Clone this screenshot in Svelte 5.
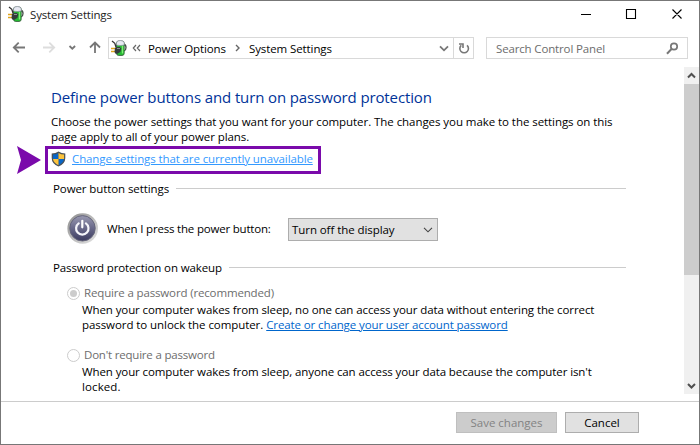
<script>
  const path = ['Power Options', 'System Settings'];
</script>

{#snippet plug(size)}
  <svg class="plug" width={size} height={size} viewBox="0 0 16 16">
    <path d="M13 4.500q2 .2 2 3t-2 3.500" fill="none" stroke="#444c47" stroke-width="1.300" />
    <rect x="5.500" y="1" width="7.700" height="14.500" rx="2.200" fill="#25b933" stroke="#365c3b" stroke-width=".8" />
    <path d="M5.500 5V3q0-2.500 3.800-2.500T13.200 3v2q-4 1-7.700 0z" fill="#e8eaf3" stroke="#858a98" stroke-width=".6" />
    <path d="M11.500 6v7.500" stroke="#82ef77" stroke-width="1.400" />
    <path d="M1 1l2.800 2.300L5 7" fill="none" stroke="#333" stroke-width="1.300" />
    <path d="M0 8.500h4M0 11.500h5" stroke="#dfa51c" stroke-width="1.600" />
    <path d="M4 7.500l4.500-.8 1.800 1.800-.8 3.200-3 2H4.500L3.500 12z" fill="#343b3c" />
    <path d="M6 8.500h3" stroke="#8c9492" />
  </svg>
{/snippet}

<div class="window">
  <header class="titlebar">
    {@render plug(16)}
    <span class="title">System Settings</span>
    <svg class="controls" width="102" height="12" viewBox="0 0 102 12">
      <path d="M0 6.500h10M45.500 1.500h9v9h-9zM91.500 1.500l9 9M100.500 1.500l-9 9" fill="none" stroke="#000" stroke-width="1.100" />
    </svg>
  </header>

  <nav class="navbar">
    <svg class="arrows" width="90" height="16" viewBox="0 0 90 16">
      <g fill="none" stroke="#777" stroke-width="1.800">
        <path d="M13 7.500H2M6.700 2.700L1.800 7.500l4.900 4.800" />
        <path d="M31 7.500h11M37.300 2.700l4.900 4.800-4.900 4.800" stroke="#ddd" />
        <path d="M57.500 6l2.800 2.700L63.100 6" />
        <path d="M83 13V2.500M78 7.500l5-5 5 5" />
      </g>
    </svg>
    <div class="address">
      {@render plug(16)}
      <svg class="back" width="9" height="8" viewBox="0 0 9 8"><path d="M4 1L1.300 4 4 7M8 1L5.300 4 8 7" fill="none" stroke="#666" stroke-width="1.200" /></svg>
      <span class="crumb first">{path[0]}</span>
      <svg class="sep" width="5" height="8" viewBox="0 0 5 8"><path d="M1 1l3 3-3 3" fill="none" stroke="#666" stroke-width="1.400" /></svg>
      <span class="crumb second">{path[1]}</span>
      <svg class="down" width="10" height="7" viewBox="0 0 10 7"><path d="M1 1.300l4 4 4-4" fill="none" stroke="#777" stroke-width="1.800" /></svg>
      <span class="refresh">
        <svg width="12" height="13" viewBox="0 0 12 13"><path d="M3.300 3.300A4.300 4.300 0 1 0 9 3.300M1 2h4v4" fill="none" stroke="#777" stroke-width="1.600" /></svg>
      </span>
    </div>
    <div class="search">
      <span>Search Control Panel</span>
      <svg width="13" height="13" viewBox="0 0 13 13"><circle cx="8" cy="4.500" r="3.200" fill="none" stroke="#777" stroke-width="1.700" /><path d="M5.500 7L1 11.700" stroke="#777" stroke-width="2" /></svg>
    </div>
  </nav>

  <div class="body">
    <main>
      <h1><span>Define power buttons and turn on password protection</span></h1>
      <p class="intro"><span class="i1">Choose the power settings that you want for your computer. The changes you make to the settings on this</span><span class="i2">page apply to all of your power plans.</span></p>

      <div class="callout">
        <svg class="pointer" width="24" height="28" viewBox="0 0 24 28"><path d="M0 0l24 14L0 28l4-14z" fill="#7a0aab" /></svg>
        <div class="highlight">
          <svg width="15" height="16" viewBox="0 0 15 16">
            <path d="M7.500 .5Q10.500 2.400 14.300 2.500V7q0 5.800-6.800 8.500Q.7 12.800 .7 7V2.500Q4.500 2.400 7.500 .5z" fill="#4b5155" />
            <path d="M7.500 1.900V8H1.900V3.600Q5 3.500 7.500 1.900zM7.500 8h5.500q-.6 4.100-5.500 6.300z" fill="#0966c6" />
            <path d="M7.500 1.900Q10 3.500 13.100 3.600V8H7.500zM7.500 8v6.300Q2.600 12.100 2 8z" fill="#fcc33c" />
          </svg>
          <a class="change" href="#change">Change settings that are currently unavailable</a>
        </div>
      </div>

      <div class="section s1"><h2>Power button settings</h2><hr /></div>

      <div class="row">
        <svg class="power" width="32" height="32" viewBox="0 0 32 32">
          <defs>
            <linearGradient id="rim" x2="1" y2="1"><stop stop-color="#8b8b8b" /><stop offset=".5" stop-color="#bbb" /><stop offset="1" stop-color="#e5e5e5" /></linearGradient>
            <linearGradient id="face" x2="0" y2="1"><stop stop-color="#9999b1" /><stop offset=".5" stop-color="#686889" /><stop offset="1" stop-color="#3c3c60" /></linearGradient>
          </defs>
          <circle cx="15.700" cy="15.500" r="15.300" fill="url(#rim)" />
          <circle cx="15.500" cy="15.300" r="12.700" fill="url(#face)" stroke="#66667b" />
          <path d="M11.700 10.400a6.200 6.200 0 1 0 7.200 0" fill="none" stroke="#f5f5fa" stroke-width="2.200" stroke-linecap="round" />
          <path d="M15.300 7.800v6.500" stroke="#fff" stroke-width="2.200" stroke-linecap="round" />
        </svg>
        <span class="label">When I press the power button:</span>
        <div class="select"><span>Turn off the display</span><svg width="10" height="6" viewBox="0 0 10 6"><path d="M1 .8l4 4 4-4" fill="none" stroke="#444" stroke-width="1.100" /></svg></div>
      </div>

      <div class="section s2"><h2>Password protection on wakeup</h2><hr /></div>

      <div class="option o1">
        <i class="radio on"></i><span class="name n1">Require a password (recommended)</span>
      </div>
      <p class="detail"><span class="d1">When your computer wakes from sleep, no one can access your data without entering the correct</span><span class="line"><span class="d2">password to unlock the computer.</span> <a class="create" href="#create">Create or change your user account password</a></span></p>
      <div class="option o2">
        <i class="radio"></i><span class="name n2">Don't require a password</span>
      </div>
      <p class="detail"><span class="d3">When your computer wakes from sleep, anyone can access your data because the computer isn't</span><span class="d4">locked.</span></p>
    </main>
    <div class="scrollbar">
      <svg width="15" height="17" viewBox="0 0 15 17"><path d="M4 10.500L7.500 7l3.500 3.500" fill="none" stroke="#505050" stroke-width="2" /></svg>
      <div class="thumb"></div>
      <svg width="15" height="17" viewBox="0 0 15 17"><path d="M4 7l3.500 3.500L11 7" fill="none" stroke="#505050" stroke-width="2" /></svg>
    </div>
  </div>

  <footer>
    <button class="save" disabled><span>Save changes</span></button>
    <button class="cancel"><span>Cancel</span></button>
  </footer>
</div>

<style>
  .window { box-sizing: border-box; width: 700px; height: 445px; border: 1px solid #777; background: #fff; overflow: hidden; display: flex; flex-direction: column; font: 11.5px/15px "Open Sans", "Noto Sans", sans-serif; color: #000; white-space: nowrap; }
  svg { display: block; flex: none; }
  span, a, h2 { flex: none; }
  .titlebar { height: 27px; flex: none; display: flex; align-items: center; padding: 0 16px 0 7px; box-sizing: border-box; }
  .titlebar .plug { margin-bottom: 1px; }
  .title { margin-left: 6px; letter-spacing: -.18px; color: #222; }
  .controls { margin: 0 0 1px auto; }
  .navbar { height: 39px; flex: none; display: flex; align-items: center; padding: 1px 11px 0; box-sizing: border-box; }
  .arrows { margin-right: 6px; }
  .address { box-sizing: border-box; width: 366px; height: 22px; border: 1px solid #d9d9d9; display: flex; align-items: center; padding-left: 2px; }
  .address .plug { margin-bottom: 1px; }
  .back { margin-left: 5px; }
  .first { margin-left: 7px; width: 78px; letter-spacing: -.12px; }
  .sep { margin-left: 9px; }
  .second { margin-left: 9px; letter-spacing: -.1px; }
  .down { margin-left: auto; margin-right: 4px; }
  .refresh { height: 20px; width: 19px; border-left: 1px solid #d9d9d9; display: flex; align-items: center; justify-content: center; }
  .search { box-sizing: border-box; width: 202px; height: 22px; margin-left: 12px; border: 1px solid #d9d9d9; display: flex; align-items: center; justify-content: space-between; padding: 0 8px 0 9px; color: #6d6d6d; letter-spacing: -.15px; }
  .body { height: 335px; flex: none; display: flex; border-bottom: 1px solid #ccc; box-sizing: border-box; }
  main { width: 683px; height: 334px; overflow: hidden; }
  h1 { margin: 20px 0 0 50px; height: 20px; font-size: 15px; line-height: 20px; font-weight: 400; letter-spacing: -.12px; color: #003399; }
  p { margin: 0; display: flex; flex-direction: column; align-items: flex-start; }
  .intro { margin: 7px 0 0 50px; height: 30px; letter-spacing: -.06px; }
  .callout { display: flex; margin: 2px 0 0 16px; height: 28px; }
  .highlight { box-sizing: border-box; width: 276px; margin-left: 4px; border: 3px solid #7a0aab; display: flex; align-items: flex-start; padding: 2px 0 0 3px; }
  .change { margin-left: 6px; color: #3399ff; letter-spacing: -.11px; }
  a { text-decoration: underline; text-underline-offset: 1px; text-decoration-thickness: 1px; }
  .section { display: flex; align-items: center; margin: 0 58px 0 52px; height: 15px; }
  .s1 { margin-top: 8px; }
  .s2 { margin-top: 16px; }
  h2 { font: inherit; margin: 0 0 2px; }
  .s1 h2 { width: 123px; letter-spacing: -.09px; }
  .s2 h2 { width: 176px; letter-spacing: -.12px; }
  hr { flex: 1; margin: 0 0 2px; border: 0; height: 1px; background: #ccc; }
  .row { display: flex; align-items: center; margin: 16px 0 0 66px; height: 32px; }
  .label { margin: 0 0 2px 8px; width: 181px; letter-spacing: -.19px; }
  .select { box-sizing: border-box; width: 150px; height: 23px; margin-top: 1px; border: 1px solid #adadad; background: #e1e1e1; display: flex; align-items: center; justify-content: space-between; padding: 0 4px 0 3px; letter-spacing: -.07px; }
  .option { display: flex; align-items: center; margin-left: 66px; height: 15px; color: #6d6d6d; }
  .o1 { margin-top: 10px; }
  .o2 { margin-top: 16px; }
  .radio { box-sizing: border-box; width: 13px; height: 13px; border: 1px solid #ccc; border-radius: 50%; flex: none; display: flex; align-items: center; justify-content: center; }
  .on::after { content: ""; width: 7px; height: 7px; border-radius: 50%; background: #ccc; }
  .name { margin: 0 0 2px 4px; }
  .n1 { letter-spacing: -.15px; }
  .n2 { letter-spacing: -.2px; }
  .detail { margin: 1px 0 0 81px; height: 30px; }
  .line { display: flex; gap: 3px; }
  .d1 { letter-spacing: -.1px; }
  .d2 { letter-spacing: -.07px; }
  .d3 { letter-spacing: -.1px; }
  .d4 { letter-spacing: .1px; }
  .create { color: #0066cc; letter-spacing: -.11px; }
  .scrollbar { width: 15px; height: 327px; background: #f0f0f0; display: flex; flex-direction: column; }
  .thumb { height: 191px; background: #cdcdcd; margin-bottom: auto; }
  footer { display: flex; align-items: flex-start; justify-content: flex-end; gap: 8px; padding: 10px 60px 0 0; }
  button { box-sizing: border-box; height: 21px; padding: 0; border: 1px solid #adadad; background: #e1e1e1; color: #000; font: inherit; }
  .save { width: 101px; background: #ccc; border-color: #bfbfbf; color: #838383; }
  .cancel { width: 74px; }
</style>
